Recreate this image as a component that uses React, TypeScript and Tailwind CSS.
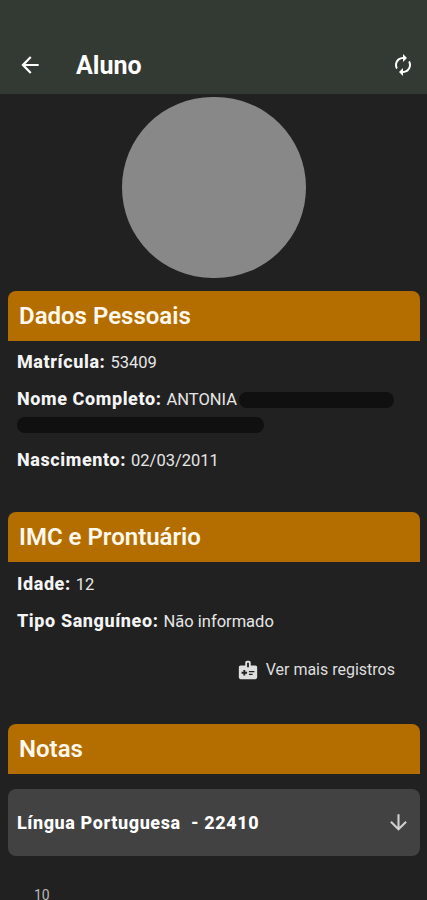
import type { ReactNode } from "react";
import {
  MdArrowBack,
  MdArrowDownward,
  MdAutorenew,
  MdMedicalInformation,
} from "react-icons/md";

function SectionTitle({ children }: { children: ReactNode }) {
  return (
    <h2 className="flex h-[50px] items-center rounded-t-lg bg-[#b46e00] pl-[11px] text-2xl font-semibold text-[#fff8ec]">
      {children}
    </h2>
  );
}

function Label({ children }: { children: ReactNode }) {
  return (
    <span className="text-[18px] font-extrabold tracking-[0.6px] text-[#f4f4f4]">
      {children}
    </span>
  );
}

function Value({ children }: { children: ReactNode }) {
  return <span className="ml-[5px] text-[16.5px] text-[#e6e6e6]">{children}</span>;
}

export default function App() {
  return (
    <div className="h-[900px] w-full overflow-hidden bg-[#212121] font-['Roboto',sans-serif] whitespace-nowrap">
      {/* Header */}
      <header className="flex h-[94px] items-center bg-[#333933] pt-[36px] pr-3 pl-[17px] text-white">
        <MdArrowBack size={26} />
        <h1 className="ml-[33px] flex-1 pt-px text-[25px] font-bold">Aluno</h1>
        <MdAutorenew size={24} />
      </header>

      {/* Foto */}
      <div className="mx-auto mt-[3px] h-[181px] w-[184px] rounded-full bg-[#888888]" />

      <main className="pr-[7px] pl-2">
        {/* Dados Pessoais */}
        <section className="mt-[13px] h-[221px]">
          <SectionTitle>Dados Pessoais</SectionTitle>
          <div className="px-[9px]">
            <div className="mt-[7px] flex h-[27px] items-baseline">
              <Label>Matrícula:</Label>
              <Value>53409</Value>
            </div>
            <div className="mt-[10px] flex h-[27px] items-baseline">
              <Label>Nome Completo:</Label>
              <Value>ANTONIA</Value>
              <span className="ml-0.5 h-4 w-[155px] translate-y-px self-center rounded-full bg-[#101010]" />
            </div>
            <div className="mt-[5px] h-4 w-[247px] rounded-full bg-[#101010]" />
            <div className="mt-[13px] flex h-[27px] items-baseline">
              <Label>Nascimento:</Label>
              <Value>02/03/2011</Value>
            </div>
          </div>
        </section>

        {/* IMC e Prontuário */}
        <section className="h-[212px]">
          <SectionTitle>IMC e Prontuário</SectionTitle>
          <div className="px-[9px]">
            <div className="mt-[8px] flex h-[27px] items-baseline">
              <Label>Idade:</Label>
              <Value>12</Value>
            </div>
            <div className="mt-[10px] flex h-[27px] items-baseline">
              <Label>Tipo Sanguíneo:</Label>
              <Value>Não informado</Value>
            </div>
            <button className="mt-[24px] ml-auto flex h-6 items-center pr-[16px] text-base text-[#dedede]">
              <MdMedicalInformation size={22} className="mr-[7px]" />
              Ver mais registros
            </button>
          </div>
        </section>

        {/* Notas */}
        <section>
          <SectionTitle>Notas</SectionTitle>
          <div className="mt-[15px] flex h-[67px] items-center justify-between rounded-lg bg-[#424242] pr-[9px] pl-[9px]">
            <span className="text-[18px] font-extrabold tracking-[0.6px] whitespace-pre text-white">
              {"Língua Portuguesa  - 22410"}
            </span>
            <MdArrowDownward size={25} className="text-[#d0d0d0]" />
          </div>
          <div className="mt-[32px] pl-[26px] text-sm leading-[14px] text-[#b8b8b8]">10</div>
        </section>
      </main>
    </div>
  );
}
